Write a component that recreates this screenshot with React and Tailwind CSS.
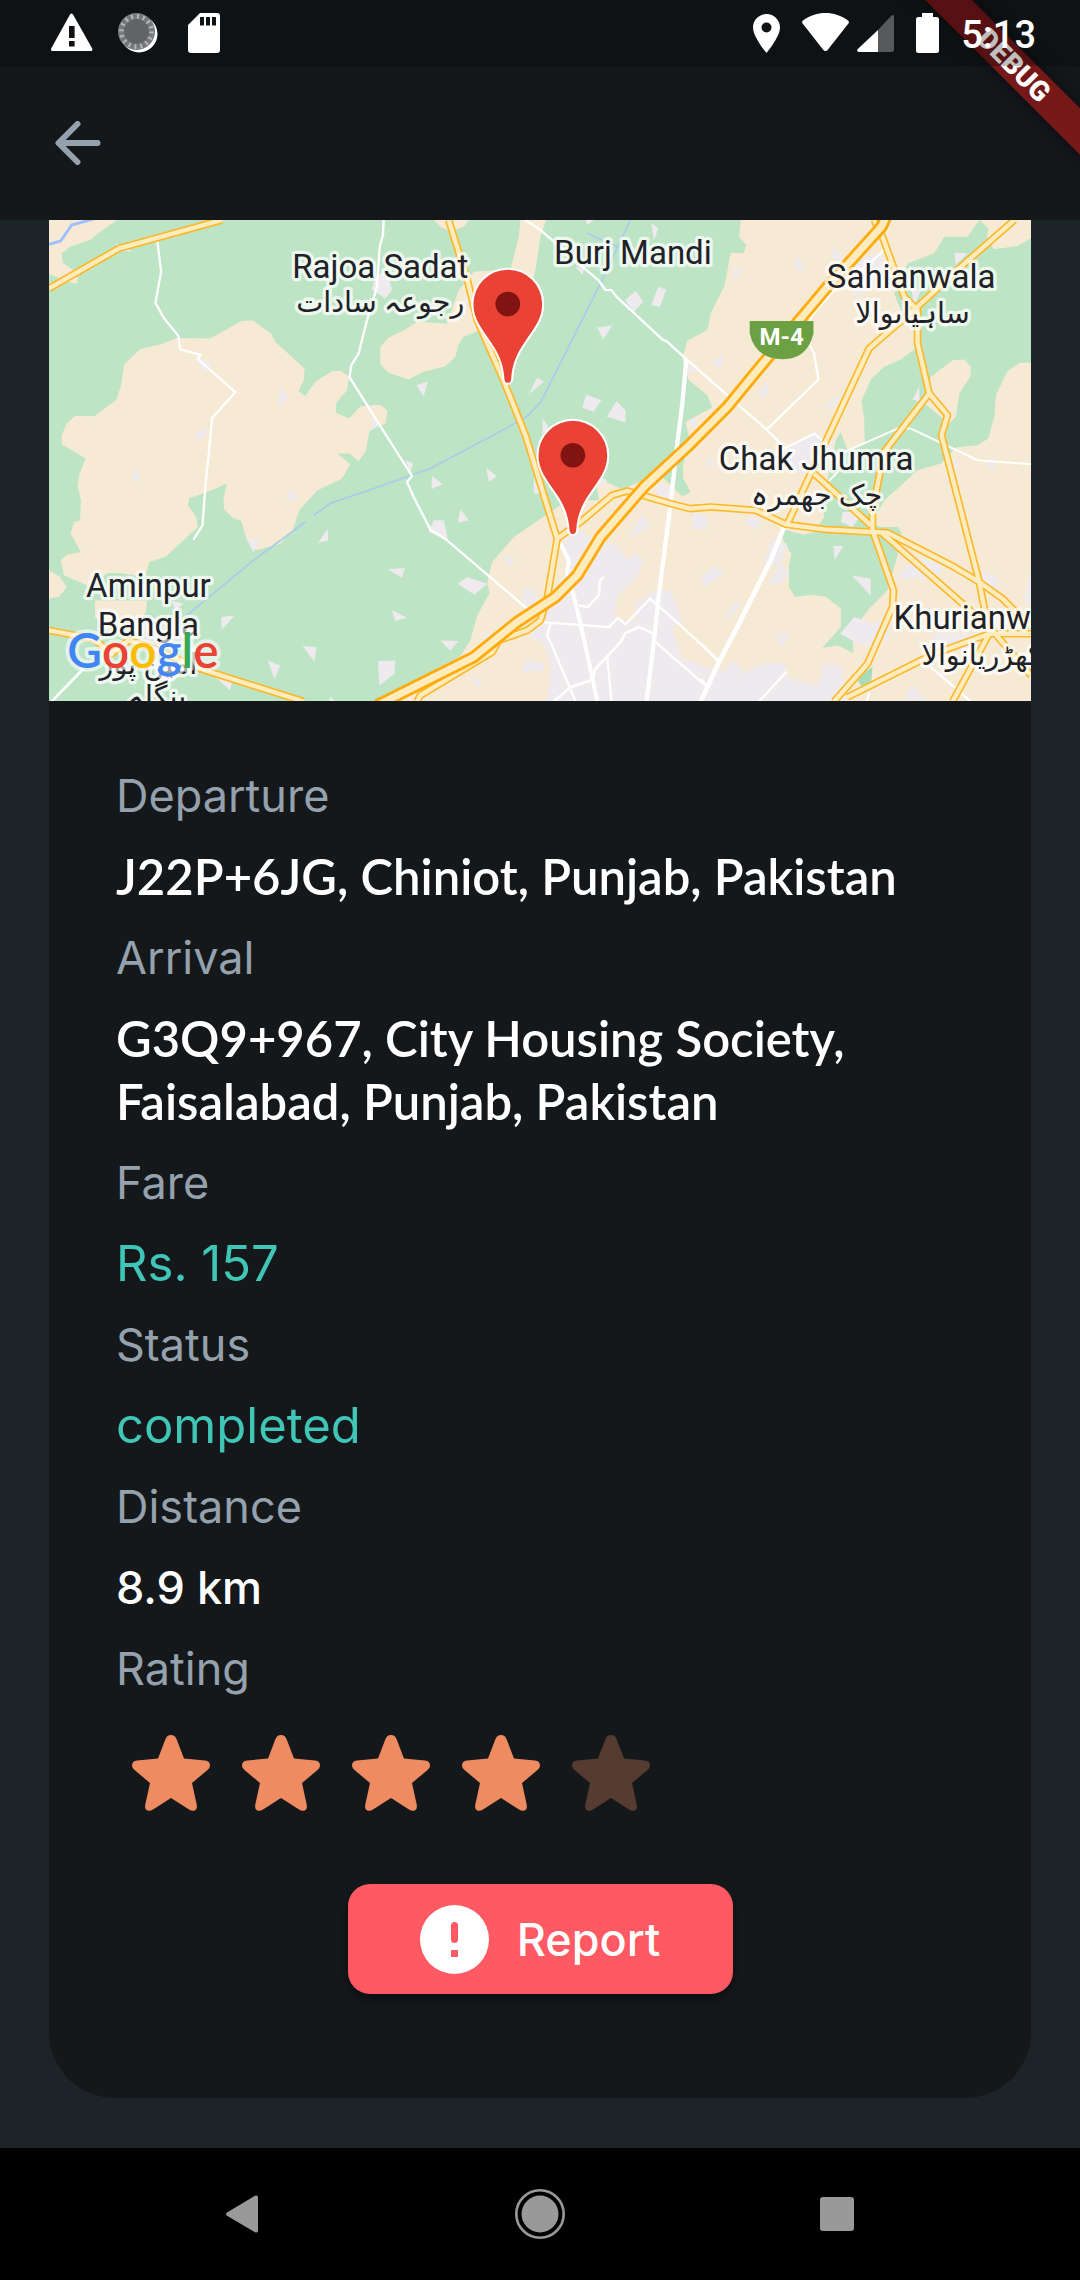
import React from "react";

const TAN = "#f7ead5";
const GREEN = "#bce4c5";
const URBAN = "#eeeaee";

const patchesWest = [
  "470,445 520,460 487,487", "722,530 745,562 712,592", "497,650 497,680 453,687", "298,770 300,815 272,798",
  "755,832 775,870 738,873", "622,990 660,985 640,1028", "862,955 864,990 833,998", "543,1220 583,1215 545,1258",
  "787,1307 828,1310 823,1355", "683,1350 720,1365 703,1407", "1013,1352 1065,1350 1062,1390 1017,1425",
  "525,1400 570,1440 575,1415", "1000,620 1015,645 990,662", "1005,200 1040,180 1055,240 1035,265 995,240",
  "225,100 265,115 275,125 240,120", "395,1170 430,1180 405,1200", "870,1458 885,1473 865,1473",
];

const patchesCentre = [
  "108,525 142,513 130,558", "470,503 490,515 445,552", "617,553 662,570 640,605 605,593", "708,573 735,600 735,637 678,620",
  "487,625 510,660 485,670", "650,352 695,346 668,388", "765,243 788,275 760,305 733,270", "833,230 857,238 838,290 812,285",
  "812,38 833,55 820,92", "75,750 98,760 90,785", "155,797 187,822 153,837", "317,772 348,798 325,815",
  "240,897 265,930 232,938", "160,930 190,930 203,990 145,965", "23,1077 73,1073 65,1103", "260,1100 320,1120 282,1153 232,1120",
  "33,1198 80,1222 45,1232", "180,1290 235,1292 210,1320", "275,1400 305,1405 290,1438", "365,1025 405,1050 385,1070",
  "430,1130 465,1145 470,1180 425,1185", "785,910 808,945 745,985", "940,905 982,920 975,960 935,955",
  "1000,1068 1030,1090 970,1130 960,1100", "830,820 870,830 865,865 828,855", "980,735 1003,760 980,780",
  "1030,433 1020,475 993,455", "920,460 955,470 930,495", "925,630 955,625 940,660", "460,800 478,850 460,850",
  "440,1348 490,1360 490,1382 420,1385", "660,800 680,810 665,830", "585,170 612,175 605,195", "615,30 640,30 620,45",
  "305,1262 350,1280 315,1295", "245,240 262,270 255,290",
];

const patchesEast = [
  "95,177 122,180 105,217", "283,135 318,180 283,180", "393,108 435,150 400,150", "70,432 60,475 33,455",
  "203,515 198,560 170,550", "425,545 400,590 360,598", "145,915 187,930 165,960 135,940",
  "210,990 260,1000 240,1060 190,1070", "240,1060 265,1085 240,1120 200,1120", "100,1175 125,1180 65,1240",
  "225,1270 270,1268 240,1312", "85,1350 120,1370 125,1405 75,1390", "425,905 485,905 455,950 420,935",
  "397,1007 428,1007 402,1048", "453,1095 510,1105 510,1157", "655,530 657,575 635,568", "640,1040 720,1060 715,1105 585,1105",
  "840,1080 890,1100 895,1150 850,1140", "985,1090 990,1090 990,1180 970,1180", "460,1220 520,1240 575,1200 560,1290 490,1310 418,1270",
  "755,745 775,760 760,785", "880,730 882,780 855,765", "760,128 800,130 765,165", "635,1425 675,1470 610,1470",
  "700,1270 880,1270 830,1320 690,1320", "340,665 400,700 350,800 270,780 240,730", "450,150 540,130 560,200 460,265",
  "630,230 660,240 640,290",
];

const minorRoads = [
  { d: "M352 95L363 185L346 278L370 322L415 378L420 418L482 434L473 446L585 546L516 623L505 740L497 810L487 945L460 988", w: 7 },
  { d: "M1030 30L1028 75L1018 110L1010 230L980 330L955 430L932 467L928 502L1020 648L1115 797L1100 815L1120 860L1170 958L1220 990L1460 1195", w: 7 },
  { d: "M35 1473L130 1375", w: 8 },
  { d: "M1455 30L1500 60L1540 95L1620 165L1675 212L1695 240L1712 240L1730 262L1865 388L1878 393L1940 450L2060 555L2180 660L2225 705", w: 7 },
  { d: "M1937 450L1925 580L1910 700L1890 880L1855 1150L1840 1290L1818 1473", w: 13 },
  { d: "M1560 1000L1585 1050L1580 1090L1598 1150L1620 1240L1655 1400L1670 1473", w: 12 },
  { d: "M1615 1185L1642 1190L1675 1155L1678 1110L1690 1100", w: 7 },
  { d: "M1505 1235L1705 1250L1732 1222L1755 1242L1828 1165L1920 1245L2035 1352", w: 7 },
  { d: "M1540 1473L1590 1430L1655 1408L1665 1375L1740 1295L1755 1268L1795 1250L1840 1270", w: 8 },
  { d: "M1530 1240L1520 1275L1532 1300L1605 1473", w: 7 },
  { d: "M1700 1340L1713 1473", w: 7 },
  { d: "M1845 1295L2000 1430", w: 7 },
  { d: "M2230 950L2190 1050L2100 1230L2035 1355L1980 1473", w: 14 },
  { d: "M2530 120L2480 165L2380 240L2310 320L2305 400L2320 430L2333 508L2178 658", w: 7 },
  { d: "M2220 720L2320 670L2355 700M2365 812L2410 765M2380 780L2400 730L2570 655L2610 655L2810 750L2970 762", w: 6 },
  { d: "M2155 1473L2238 1383M1980 1298L2035 1355M2670 1370L2790 1473M1980 1405L2000 1430", w: 7 },
  { d: "M2485 1445L2478 1473", w: 6 },
];

const mainRoads = [
  "M1225 30L1282 215L1310 330L1385 500L1455 675L1550 985L1520 1165L1500 1230L1460 1260L1375 1290L1355 1325L1140 1455L1130 1473",
  "M1550 985L1620 935L1715 855L1760 842L1890 880L1948 895L2010 890L2145 900L2235 942L2350 957L2490 965L2540 967L2740 1070L2815 1115L2885 1165L2970 1250",
  "M2665 550L2720 615L2702 675L2815 1115L2845 1270",
  "M2920 30L2760 170L2630 290L2485 415L2240 940",
  "M2320 790L2490 945",
  "M2520 965L2845 1250L2970 1395",
  "M2845 1270L2735 1473M2845 1270L2680 1330L2420 1460M2845 1270H2970",
  "M27 1260L160 1285L215 1330L265 1290L330 1310L480 1375L790 1473",
  "M27 235L237 115L545 30",
  "M2500 30L2525 80L2590 260L2630 300L2630 400L2665 550L2530 725L2495 900L2495 960L2558 1140L2555 1190L2480 1360L2380 1473",
];

const MOTORWAY =
  "M1010 1485L1300 1340L1430 1235L1545 1160L1610 1095L1680 980L1810 830L1940 710L2060 590L2150 480L2360 230L2522 50L2536 20";

function MapPin({ x, y }) {
  return (
    <g transform={`translate(${x} ${y})`}>
      <path
        d="M-103 0A103 103 0 0 1 103 0C103 45 80 70 50 115C25 150 12 185 10 225Q9 236 0 236Q-9 236-10 225C-12 185-25 150-50 115C-80 70-103 45-103 0Z"
        fill="#ea4335"
        stroke="#fff"
        strokeWidth="12"
        paintOrder="stroke"
      />
      <circle r="37" fill="#811411" />
    </g>
  );
}

function RouteMap() {
  return (
    <svg viewBox="27 30 2943 1443" className="block h-auto w-full" role="img" aria-label="Route map">
      <rect x="27" y="30" width="2943" height="1443" fill={GREEN} />
      <g fill={TAN}>
        <path d="M27 30L232 30L180 65L150 90L90 110L65 130L68 158L115 190L110 222L60 205L27 192Z" />
        <path d="M300 417L365 402L410 384L510 385L605 333L637 331L692 370L705 395L793 475L790 512L775 543L795 558L825 515L875 483L900 482L927 498L920 540L888 578L886 607L927 625L960 588L1020 584L1042 602L1035 640L988 660L976 722L955 753L927 730L892 730L930 762L905 805L832 840L777 900L757 960L720 1000L650 1020L620 990L603 932L577 922L552 898L550 865L560 820L510 842L448 863L443 885L468 920L473 950L378 1038L328 1055L315 1100L240 1088L205 1088L140 1125L72 1095L62 1050L80 1033L123 1025L92 970L102 935L120 930L123 870L113 830L117 795L137 745L65 702L65 675L80 640L105 617L162 618L228 570L242 530L252 463Z" />
        <path d="M27 1080L60 1100L80 1130L58 1158L27 1165Z" />
        <path d="M165 1170H320L318 1200L300 1250L200 1260L165 1220Z" />
        <g transform="translate(1020 0)">
          <path d="M0 410L25 382L75 358L110 335L200 340L235 240L280 185L390 178L415 80L420 30L497 30L480 80L465 180L450 230L300 360L250 380L235 402L225 440L195 468L130 485L85 508L25 488L0 462Z" />
          <path d="M160 30H265L250 50L210 65L180 50Z" />
          <path d="M1080 30L1075 80L1097 105L1088 130L1050 128L1035 210L1030 230L990 310L980 360L920 392L905 450L925 510L980 555L995 592L915 635L925 680L907 770L908 805L930 845L905 858L845 800L815 798L725 838L645 800L655 870L560 870L500 912L400 980L335 1055L320 1120L328 1148L290 1215L270 1290L240 1337L0 1465V1473H1950V30Z" />
        </g>
      </g>
      <g transform="translate(1980 0)">
        <path
          fill={GREEN}
          d="M800 80L835 30L862 55L858 85L880 118L950 108L990 85V458L955 458L918 485L885 555L880 620L862 685L830 705L765 712L720 760L650 780L590 835L550 870L535 900L500 935L540 950L590 950L602 965L590 1035L560 1140L500 1200L455 1265L458 1328L410 1305L365 1313L420 1250L420 1195L375 1158L330 1153L283 1160L265 1130L265 1065L272 1030L245 985L240 955L310 973L340 965L370 920L365 880L385 790L405 690L420 665L440 720L492 700L490 625L482 570L512 505L550 470L600 448L650 410L640 370L600 300L580 250L620 160L700 130L730 80Z"
        />
        <path fill={TAN} d="M690 500L755 450L790 448L810 470L808 500L775 550L765 620L745 640L670 580Z" />
        <path fill="#a9dcb8" d="M465 1400L515 1370L510 1430L490 1440Z" />
      </g>
      <g fill={URBAN}>
        <path d="M1565 990L1620 960L1660 990L1720 1000L1765 1050L1785 1025L1810 1050L1790 1100L1730 1160L1720 1230L1785 1230L1785 1180L1840 1140L1890 1140L1925 1230L1895 1250L1920 1340L1995 1370L2100 1390L2180 1355L2230 1360L2240 1400L2330 1425L2350 1360L2400 1365L2415 1473H1520L1530 1370L1510 1300L1450 1270L1510 1200L1580 1080Z" />
        <path d="M300 1220L420 1230L470 1320L330 1310L250 1290Z" opacity="0.7" />
        {patchesWest.map((p) => <polygon key={p} points={p} />)}
        <g transform="translate(1020 0)">{patchesCentre.map((p) => <polygon key={p} points={p} />)}</g>
        <g transform="translate(1980 0)">{patchesEast.map((p) => <polygon key={p} points={p} />)}</g>
      </g>
      <g fill="none" strokeLinejoin="round">
        <path d="M27 103L62 93L95 45L165 26" stroke="#9fc0ff" strokeWidth="9" />
        <path d="M1770 30L1675 230L1500 577L1460 618L1405 650L1170 775L1020 828L872 878L820 915M795 935L640 1050L440 1215M1640 70L1730 110" stroke="#a8cdea" strokeWidth="5" />
        {minorRoads.map((r) => <path key={r.d} d={r.d} stroke="#fff" strokeWidth={r.w} />)}
        {mainRoads.map((d) => <path key={d} d={d} stroke="#fdb92c" strokeWidth="23" />)}
        {mainRoads.map((d) => <path key={d} d={d} stroke="#ffecbe" strokeWidth="13" />)}
        <path d={MOTORWAY} stroke="#ffab0a" strokeWidth="38" />
        <path d={MOTORWAY} stroke="#ffecbe" strokeWidth="21" />
      </g>
      <path d="M2127 333H2318V370Q2300 447 2225 447Q2145 447 2127 370Z" fill="#6ba143" />
      <text x="2223" y="406" textAnchor="middle" fill="#fff" fontSize="72" className="font-['Roboto'] font-bold">M-4</text>
      <g
        className="font-['Roboto','DejaVu_Sans',sans-serif]"
        fontSize="99"
        fill="#202227"
        stroke="#fff"
        strokeOpacity="0.72"
        strokeWidth="20"
        strokeLinejoin="round"
        paintOrder="stroke"
        textAnchor="middle"
      >
        <text x="1020" y="205">Rajoa Sadat</text>
        <text x="1777" y="163">Burj Mandi</text>
        <text x="2611" y="235">Sahianwala</text>
        <text x="2326" y="780">Chak Jhumra</text>
        <text x="2558" y="1257" textAnchor="start">Khurianwala</text>
        <text x="325" y="1160">Aminpur</text>
        <text x="325" y="1277">Bangla</text>
        <g fontSize="86" lang="ur">
          <text x="1020" y="307">رجوعہ سادات</text>
          <text x="2615" y="339">ساہیاںوالا</text>
          <text x="2328" y="884">چک جھمرہ</text>
          <text x="2642" y="1363" textAnchor="start">کھڑریانوالا</text>
          <text x="325" y="1390">امین پور</text>
          <text x="350" y="1488">بنگلہ</text>
        </g>
      </g>
      <text
        x="82"
        y="1374"
        fontSize="143"
        stroke="#fff"
        strokeOpacity="0.6"
        strokeWidth="22"
        strokeLinejoin="round"
        paintOrder="stroke"
        className="font-['Lato'] font-semibold"
      >
        <tspan fill="#4285f4">G</tspan>
        <tspan fill="#ea4335">o</tspan>
        <tspan fill="#fbbc04">o</tspan>
        <tspan fill="#4285f4">g</tspan>
        <tspan fill="#34a853">l</tspan>
        <tspan fill="#ea4335">e</tspan>
      </text>
      <MapPin x={1402} y={282} />
      <MapPin x={1597} y={735} />
    </svg>
  );
}

function StatusBar() {
  return (
    <div className="relative z-20 flex h-[66px] items-center justify-between bg-black/25 pl-[50px] pr-[44px] text-white">
      <div className="flex items-center gap-6">
        <svg viewBox="0 0 44 40" className="h-10 w-11" aria-hidden="true">
          <path fill="currentColor" fillRule="evenodd" d="M20 1.6Q21.500-.4 23 1.600L42.200 35.500Q43 38 41 38H2.500Q.5 38 1.200 35.500ZM19 13V25H24.600V13ZM19 28V33.500H24.600V28Z" />
        </svg>
        <svg viewBox="0 0 44 40" className="h-10 w-11" aria-hidden="true">
          <circle cx="21" cy="21" r="18.500" fill="#fff" />
          <circle cx="18.500" cy="18.500" r="18.500" fill="#77787a" />
          <circle cx="18.500" cy="18.500" r="15" fill="none" stroke="#b4b5b6" strokeWidth="5" strokeDasharray="2 3.890" />
          <circle cx="18.500" cy="18.500" r="12.500" fill="#626365" />
        </svg>
        <svg viewBox="0 0 36 40" className="h-10 w-9" aria-hidden="true">
          <path fill="currentColor" fillRule="evenodd" d="M14 0H31Q34 0 34 3V37Q34 40 31 40H5Q2 40 2 37V12ZM14 4V12.500H18V4ZM20 4V12.500H24V4ZM26 4V12.500H30V4Z" />
        </svg>
      </div>
      <div className="flex items-center gap-[22px]">
        <svg viewBox="0 0 27 40" className="h-10 w-[27px]" aria-hidden="true">
          <path fill="currentColor" fillRule="evenodd" d="M13.500 1C21 1 27 7 27 14.500C27 24 13.500 40 13.500 40S0 24 0 14.500C0 7 6 1 13.500 1ZM13.500 9.500A5 5 0 1 0 13.500 19.500A5 5 0 1 0 13.500 9.500Z" />
        </svg>
        <div className="flex items-center gap-2">
          <svg viewBox="0 0 47 40" className="h-10 w-[47px]" aria-hidden="true">
            <path fill="currentColor" d="M.6 10.500Q-.6 9 1 7.500C14-2.500 33-2.500 46 7.500Q47.600 9 46.400 10.500L26 36.500Q23.500 39.500 21 36.500Z" />
          </svg>
          <svg viewBox="0 0 37 40" className="h-10 w-[37px]" aria-hidden="true">
            <path fill="#57595b" d="M21 17L34.500 2.500Q37 1 37 4V36.500Q37 39 34.500 39H21Z" />
            <path fill="currentColor" d="M21 17V39H2Q-1 38.500 .8 36Z" />
          </svg>
        </div>
        <svg viewBox="0 0 23 40" className="h-10 w-[23px]" aria-hidden="true">
          <path fill="currentColor" d="M6 0H17V4H20.500Q23 4 23 6.500V37.500Q23 40 20.500 40H2.500Q0 40 0 37.500V6.500Q0 4 2.500 4H6Z" />
        </svg>
        <time className="pt-1 font-['Roboto'] text-[38px] font-medium leading-10">5:13</time>
      </div>
    </div>
  );
}

function DebugBanner() {
  return (
    <div className="pointer-events-none absolute right-0 top-0 z-10 size-[220px] overflow-hidden">
      <div className="absolute -right-[94px] top-[49px] flex h-[33px] w-[320px] rotate-45 items-center justify-center bg-[#761718] font-['Roboto'] text-[28px] font-black leading-none text-white shadow-[0_0_16px_rgba(0,0,0,0.5)]">
        DEBUG
      </div>
    </div>
  );
}

function Label({ children }) {
  return <dt className="font-['Inter'] text-[45px] leading-[55px] text-[#95a1ac]">{children}</dt>;
}

const valueStyles = {
  address: "font-['Lato'] text-[49px] font-semibold leading-[63px] text-white",
  accent: "font-['Inter'] text-[49px] leading-[63px] text-[#40c6b6]",
  measure: "font-['Inter'] text-[45px] font-medium leading-[63px] text-white",
};

const details = [
  { label: "Departure", value: "J22P+6JG, Chiniot, Punjab, Pakistan", kind: "address" },
  { label: "Arrival", value: "G3Q9+967, City Housing Society, Faisalabad, Punjab, Pakistan", kind: "address" },
  { label: "Fare", value: "Rs. 157", kind: "accent" },
  { label: "Status", value: "completed", kind: "accent" },
  { label: "Distance", value: "8.9 km", kind: "measure" },
];

function Star({ filled }) {
  return (
    <span className="flex size-[110px] items-center justify-center">
      <svg viewBox="0 0 78 76" className={filled ? "w-[78px] text-[#ee8b60]" : "w-[78px] text-[#563b30]"} aria-hidden="true">
        <path fill="currentColor" d="M39 0Q43 0 44.500 4L52 23.500L73 25.500Q78 26 78 30.500Q78 33 75.500 35L60 48L64.800 70Q65.500 75.500 61 75.800Q59 75.800 57 74.500L39 63L21 74.500Q19 75.800 17 75.800Q12.500 75.500 13.200 70L18 48L2.500 35Q0 33 0 30.500Q0 26 5 25.500L26 23.500L33.500 4Q35 0 39 0Z" />
      </svg>
    </span>
  );
}

export default function App() {
  return (
    <div className="relative flex min-h-screen flex-col overflow-hidden bg-[#1d2428]">
      <header className="bg-[#14181b]">
        <StatusBar />
        <div className="flex h-[154px] items-center pl-[45px]">
          <button type="button" aria-label="Back" className="flex size-[66px] items-center justify-center text-[#95a1ac]">
            <svg viewBox="0 0 46 44" className="h-11 w-[46px]" fill="none" stroke="currentColor" strokeWidth="6" strokeLinecap="round" strokeLinejoin="round" aria-hidden="true">
              <path d="M22.500 3L3.500 22L22.500 41M4 22H42.500" />
            </svg>
          </button>
        </div>
      </header>
      <DebugBanner />

      <main className="flex-1 px-[49px] pb-[50px]">
        <section className="overflow-hidden rounded-b-[66px] bg-[#14181b]">
          <RouteMap />
          <div className="flex flex-col px-[67px] pb-[104px] pt-[67px]">
            <dl className="flex flex-col gap-[22px]">
              {details.map((item) => (
                <div key={item.label} className="flex flex-col gap-[22px]">
                  <Label>{item.label}</Label>
                  <dd className={valueStyles[item.kind]}>{item.value}</dd>
                </div>
              ))}
              <div className="flex flex-col gap-[22px]">
                <Label>Rating</Label>
                <dd className="flex" role="img" aria-label="4 out of 5 stars">
                  {[1, 2, 3, 4, 5].map((n) => <Star key={n} filled={n <= 4} />)}
                </dd>
              </div>
            </dl>
            <button
              type="button"
              className="mt-14 flex h-[110px] w-[385px] items-center justify-center gap-7 self-center rounded-[22px] bg-[#ff5963] font-['Inter'] text-[45px] font-medium text-white shadow-[0_5px_10px_rgba(0,0,0,0.4)]"
            >
              <svg viewBox="0 0 69 69" className="size-[69px]" aria-hidden="true">
                <circle cx="34.500" cy="34.500" r="34.500" fill="#fff" />
                <rect x="31" y="17" width="7" height="21" rx="3.500" fill="#ff5963" />
                <rect x="31" y="45" width="7" height="7" fill="#ff5963" />
              </svg>
              Report
            </button>
          </div>
        </section>
      </main>

      <nav className="flex h-[132px] items-center justify-between bg-black px-[20%] text-[#999]">
        <button type="button" aria-label="Back" className="size-[50px]">
          <svg viewBox="0 0 50 50" aria-hidden="true">
            <path fill="currentColor" d="M11 23.500L39 6.800Q42 5.500 42 8.500V41.500Q42 44.500 39 43.200L11 26.800Q9 25 11 23.500Z" />
          </svg>
        </button>
        <button type="button" aria-label="Home" className="size-[50px]">
          <svg viewBox="0 0 50 50" aria-hidden="true">
            <circle cx="25" cy="25" r="23.700" fill="none" stroke="currentColor" strokeWidth="2.600" />
            <circle cx="25" cy="25" r="18.500" fill="currentColor" />
          </svg>
        </button>
        <button type="button" aria-label="Recent apps" className="size-[50px]">
          <svg viewBox="0 0 50 50" aria-hidden="true">
            <rect x="6" y="8" width="34" height="34" rx="3" fill="currentColor" />
          </svg>
        </button>
      </nav>
    </div>
  );
}
